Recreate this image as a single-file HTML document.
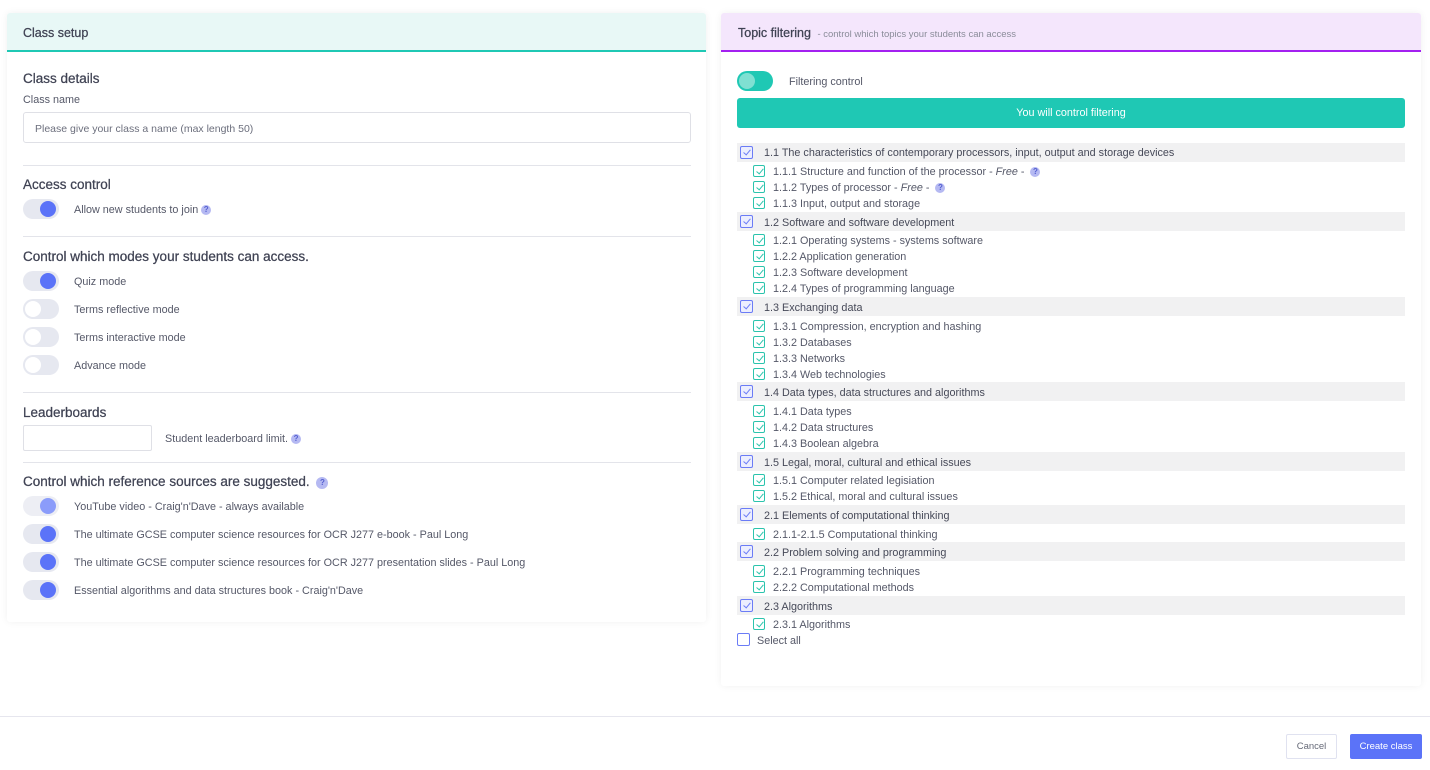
<!DOCTYPE html>
<html><head><meta charset="utf-8"><style>
*{box-sizing:border-box;margin:0;padding:0}
body{width:1430px;height:770px;background:#fff;font-family:"Liberation Sans",sans-serif;color:#4a4d5e;position:relative;overflow:hidden;font-size:11px}
.a{position:absolute;white-space:nowrap}
.card{position:absolute;background:#fff;box-shadow:0 0 8px rgba(0,0,0,.06);border-radius:3px}
.h{font-size:13.5px;color:#3f4253;margin-top:1px;-webkit-text-stroke:0.25px #3f4253}
.t{font-size:10.8px;color:#555868;margin-top:1px}
.hr{position:absolute;height:1px;background:#e3e4ea;left:23px;width:668px}
.tg{position:absolute;left:23px;width:36px;height:20px;border-radius:10px;background:#e6e8f0}
.tg i{position:absolute;top:2px;width:16px;height:16px;border-radius:50%}
.on i{left:17px;background:#5b73f8}
.off i{left:2px;background:#fff}
.q{display:inline-block;width:10px;height:10px;border-radius:50%;background:#b5b9f2;color:#5560d0;font-size:8px;line-height:10px;text-align:center;font-weight:bold;vertical-align:1px;margin-left:3px;-webkit-text-stroke:0}
.sec{position:absolute;left:737px;width:668px;height:19px;background:#f1f1f2}
.cb{position:absolute;width:13px;height:13px;border:1px solid #6b7cf6;background:#eceefe;border-radius:2px}
.cb:after{content:"";position:absolute;left:3.5px;top:1px;width:3px;height:6px;border:solid #6b7cf6;border-width:0 1.3px 1.3px 0;transform:rotate(40deg)}
.ci{position:absolute;width:12px;height:12px;border:1px solid #2bc4ad;border-radius:2px;background:#fff}
.ci:after{content:"";position:absolute;left:3.5px;top:1px;width:3px;height:6px;border:solid #2bc4ad;border-width:0 1.2px 1.2px 0;transform:rotate(40deg)}
</style></head><body>

<div class="card" style="left:7px;top:13px;width:699px;height:609px">
<div style="height:39px;background:#e8f8f6;border-bottom:2px solid #1fc8b4;border-radius:3px 3px 0 0"></div>
</div>
<div class="a h" style="left:23px;top:25px;font-size:12.5px">Class setup</div>
<div class="a h" style="left:23px;top:70px">Class details</div>
<div class="a t" style="left:23px;top:93px">Class name</div>
<div class="a" style="left:23px;top:112px;width:668px;height:31px;border:1px solid #dfe0e6;border-radius:3px;padding:10px 11px;font-size:10.5px;color:#6c6f7d">Please give your class a name (max length 50)</div>
<div class="hr" style="top:165px"></div>
<div class="a h" style="left:23px;top:176px">Access control</div>
<div class="tg on" style="top:199px"><i></i></div><div class="a t" style="left:74px;top:203px">Allow new students to join<span class="q">?</span></div>
<div class="hr" style="top:236px"></div>
<div class="a h" style="left:23px;top:248px">Control which modes your students can access.</div>
<div class="tg on" style="top:271px"><i></i></div><div class="a t" style="left:74px;top:275px">Quiz mode</div>
<div class="tg off" style="top:299px"><i></i></div><div class="a t" style="left:74px;top:303px">Terms reflective mode</div>
<div class="tg off" style="top:327px"><i></i></div><div class="a t" style="left:74px;top:331px">Terms interactive mode</div>
<div class="tg off" style="top:355px"><i></i></div><div class="a t" style="left:74px;top:359px">Advance mode</div>
<div class="hr" style="top:392px"></div>
<div class="a h" style="left:23px;top:404px">Leaderboards</div>
<div class="a" style="left:23px;top:425px;width:129px;height:26px;border:1px solid #dfe0e6;border-radius:2px"></div>
<div class="a t" style="left:165px;top:432px">Student leaderboard limit.<span class="q">?</span></div>
<div class="hr" style="top:462px"></div>
<div class="a h" style="left:23px;top:473px">Control which reference sources are suggested. <span class="q" style="width:12px;height:12px;line-height:12px">?</span></div>
<div class="tg on" style="top:496px;opacity:.7"><i></i></div><div class="a t" style="left:74px;top:500px">YouTube video - Craig'n'Dave - always available</div>
<div class="tg on" style="top:524px"><i></i></div><div class="a t" style="left:74px;top:528px">The ultimate GCSE computer science resources for OCR J277 e-book - Paul Long</div>
<div class="tg on" style="top:552px"><i></i></div><div class="a t" style="left:74px;top:556px">The ultimate GCSE computer science resources for OCR J277 presentation slides - Paul Long</div>
<div class="tg on" style="top:580px"><i></i></div><div class="a t" style="left:74px;top:584px">Essential algorithms and data structures book - Craig'n'Dave</div>

<div class="card" style="left:721px;top:13px;width:700px;height:673px">
<div style="height:39px;background:#f4e6fc;border-bottom:2px solid #a320f0;border-radius:3px 3px 0 0"></div>
</div>
<div class="a h" style="left:738px;top:25px;font-size:12.5px">Topic filtering <span style="font-size:9.5px;color:#8a8c99;margin-left:3px;-webkit-text-stroke:0">- control which topics your students can access</span></div>
<div class="a" style="left:737px;top:71px;width:36px;height:20px;border-radius:10px;background:#1fc8b4"><i style="position:absolute;left:2px;top:2px;width:16px;height:16px;border-radius:50%;background:#7fe0d2"></i></div>
<div class="a t" style="left:789px;top:75px">Filtering control</div>
<div class="a" style="left:737px;top:98px;width:668px;height:30px;background:#1fc8b4;border-radius:3px;color:#fff;font-size:10.8px;text-align:center;line-height:31px">You will control filtering</div>

<div class="sec" style="top:143px"></div><div class="cb" style="left:740px;top:146px"></div><div class="a t" style="left:764px;top:146px;color:#464958">1.1 The characteristics of contemporary processors, input, output and storage devices</div>
<div class="ci" style="left:753px;top:165px"></div><div class="a t" style="left:773px;top:165px">1.1.1 Structure and function of the processor - <i>Free</i> - <span class="q">?</span></div>
<div class="ci" style="left:753px;top:181px"></div><div class="a t" style="left:773px;top:181px">1.1.2 Types of processor - <i>Free</i> - <span class="q">?</span></div>
<div class="ci" style="left:753px;top:197px"></div><div class="a t" style="left:773px;top:197px">1.1.3 Input, output and storage</div>

<div class="sec" style="top:212px"></div><div class="cb" style="left:740px;top:215px"></div><div class="a t" style="left:764px;top:216px;color:#464958">1.2 Software and software development</div>
<div class="ci" style="left:753px;top:234px"></div><div class="a t" style="left:773px;top:234px">1.2.1 Operating systems - systems software</div>
<div class="ci" style="left:753px;top:250px"></div><div class="a t" style="left:773px;top:250px">1.2.2 Application generation</div>
<div class="ci" style="left:753px;top:266px"></div><div class="a t" style="left:773px;top:266px">1.2.3 Software development</div>
<div class="ci" style="left:753px;top:282px"></div><div class="a t" style="left:773px;top:282px">1.2.4 Types of programming language</div>

<div class="sec" style="top:297px"></div><div class="cb" style="left:740px;top:300px"></div><div class="a t" style="left:764px;top:301px;color:#464958">1.3 Exchanging data</div>
<div class="ci" style="left:753px;top:320px"></div><div class="a t" style="left:773px;top:320px">1.3.1 Compression, encryption and hashing</div>
<div class="ci" style="left:753px;top:336px"></div><div class="a t" style="left:773px;top:336px">1.3.2 Databases</div>
<div class="ci" style="left:753px;top:352px"></div><div class="a t" style="left:773px;top:352px">1.3.3 Networks</div>
<div class="ci" style="left:753px;top:368px"></div><div class="a t" style="left:773px;top:368px">1.3.4 Web technologies</div>

<div class="sec" style="top:382px"></div><div class="cb" style="left:740px;top:385px"></div><div class="a t" style="left:764px;top:386px;color:#464958">1.4 Data types, data structures and algorithms</div>
<div class="ci" style="left:753px;top:405px"></div><div class="a t" style="left:773px;top:405px">1.4.1 Data types</div>
<div class="ci" style="left:753px;top:421px"></div><div class="a t" style="left:773px;top:421px">1.4.2 Data structures</div>
<div class="ci" style="left:753px;top:437px"></div><div class="a t" style="left:773px;top:437px">1.4.3 Boolean algebra</div>

<div class="sec" style="top:452px"></div><div class="cb" style="left:740px;top:455px"></div><div class="a t" style="left:764px;top:456px;color:#464958">1.5 Legal, moral, cultural and ethical issues</div>
<div class="ci" style="left:753px;top:474px"></div><div class="a t" style="left:773px;top:474px">1.5.1 Computer related legisiation</div>
<div class="ci" style="left:753px;top:490px"></div><div class="a t" style="left:773px;top:490px">1.5.2 Ethical, moral and cultural issues</div>

<div class="sec" style="top:505px"></div><div class="cb" style="left:740px;top:508px"></div><div class="a t" style="left:764px;top:509px;color:#464958">2.1 Elements of computational thinking</div>
<div class="ci" style="left:753px;top:528px"></div><div class="a t" style="left:773px;top:528px">2.1.1-2.1.5 Computational thinking</div>

<div class="sec" style="top:542px"></div><div class="cb" style="left:740px;top:545px"></div><div class="a t" style="left:764px;top:546px;color:#464958">2.2 Problem solving and programming</div>
<div class="ci" style="left:753px;top:565px"></div><div class="a t" style="left:773px;top:565px">2.2.1 Programming techniques</div>
<div class="ci" style="left:753px;top:581px"></div><div class="a t" style="left:773px;top:581px">2.2.2 Computational methods</div>

<div class="sec" style="top:596px"></div><div class="cb" style="left:740px;top:599px"></div><div class="a t" style="left:764px;top:600px;color:#464958">2.3 Algorithms</div>
<div class="ci" style="left:753px;top:618px"></div><div class="a t" style="left:773px;top:618px">2.3.1 Algorithms</div>
<div class="a" style="left:737px;top:633px;width:13px;height:13px;border:1px solid #6b7cf6;border-radius:2px"></div><div class="a t" style="left:757px;top:634px">Select all</div>

<div class="a" style="left:0;top:716px;width:1430px;height:1px;background:#e6e6ee"></div>
<div class="a" style="left:1286px;top:734px;width:51px;height:25px;border:1px solid #e0e2f0;border-radius:2px;font-size:9.5px;color:#666a78;text-align:center;line-height:24px">Cancel</div>
<div class="a" style="left:1350px;top:734px;width:72px;height:25px;background:#5b73f8;border-radius:2px;font-size:9.5px;color:#fff;text-align:center;line-height:26px">Create class</div>
</body></html>
